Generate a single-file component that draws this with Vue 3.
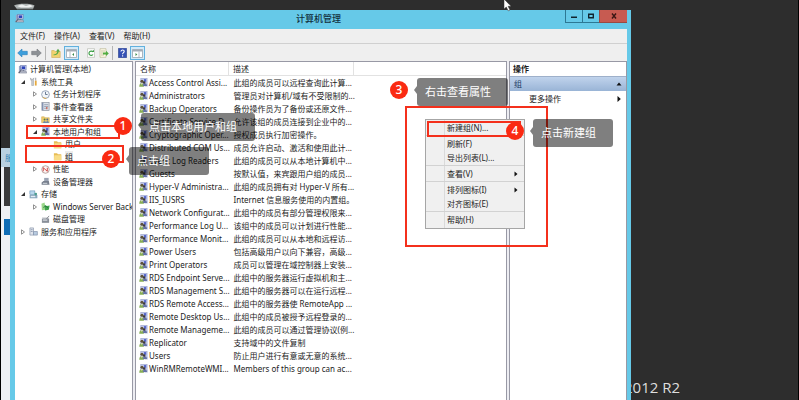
<script setup>
import { ref } from 'vue'

const menus = ['文件(F)', '操作(A)', '查看(V)', '帮助(H)']

const tree = [
  { level: 0, icon: 'computer', label: '计算机管理(本地)', mark: '' },
  { level: 1, icon: 'tools', label: '系统工具', mark: 'open' },
  { level: 2, icon: 'clock', label: '任务计划程序', mark: 'closed' },
  { level: 2, icon: 'book', label: '事件查看器', mark: 'closed' },
  { level: 2, icon: 'share', label: '共享文件夹', mark: 'closed' },
  { level: 2, icon: 'users', label: '本地用户和组', mark: 'open' },
  { level: 3, icon: 'folder', label: '用户', mark: '' },
  { level: 3, icon: 'folder', label: '组', mark: '' },
  { level: 2, icon: 'perf', label: '性能', mark: 'closed' },
  { level: 2, icon: 'device', label: '设备管理器', mark: '' },
  { level: 1, icon: 'storage', label: '存储', mark: 'open' },
  { level: 2, icon: 'backup', label: 'Windows Server Back', mark: 'closed' },
  { level: 2, icon: 'disk', label: '磁盘管理', mark: '' },
  { level: 1, icon: 'service', label: '服务和应用程序', mark: 'closed' }
]

const groups = [
  ['Access Control Assi...', '此组的成员可以远程查询此计算...'],
  ['Administrators', '管理员对计算机/域有不受限制的...'],
  ['Backup Operators', '备份操作员为了备份或还原文件...'],
  ['Certificate Service D...', '允许该组的成员连接到企业中的...'],
  ['Cryptographic Oper...', '授权成员执行加密操作。'],
  ['Distributed COM Us...', '成员允许启动、激活和使用此计...'],
  ['Event Log Readers', '此组的成员可以从本地计算机中...'],
  ['Guests', '按默认值，来宾跟用户组的成员...'],
  ['Hyper-V Administra...', '此组的成员拥有对 Hyper-V 所有...'],
  ['IIS_IUSRS', 'Internet 信息服务使用的内置组。'],
  ['Network Configurat...', '此组中的成员有部分管理权限来...'],
  ['Performance Log U...', '该组中的成员可以计划进行性能...'],
  ['Performance Monit...', '此组的成员可以从本地和远程访...'],
  ['Power Users', '包括高级用户以向下兼容，高级...'],
  ['Print Operators', '成员可以管理在域控制器上安装...'],
  ['RDS Endpoint Serve...', '此组中的服务器运行虚拟机和主...'],
  ['RDS Management S...', '此组中的服务器可以在运行远程...'],
  ['RDS Remote Access...', '此组中的服务器使 RemoteApp ...'],
  ['Remote Desktop Us...', '此组中的成员被授予远程登录的...'],
  ['Remote Manageme...', '此组的成员可以通过管理协议(例...'],
  ['Replicator', '支持域中的文件复制'],
  ['Users', '防止用户进行有意或无意的系统...'],
  ['WinRMRemoteWMI...', 'Members of this group can ac...']
]

const contextMenu = [
  [{ label: '新建组(N)...' }],
  [{ label: '刷新(F)' }, { label: '导出列表(L)...' }],
  [{ label: '查看(V)', sub: true }],
  [{ label: '排列图标(I)', sub: true }, { label: '对齐图标(E)' }],
  [{ label: '帮助(H)' }]
]

const steps = [
  { n: 1, text: '点击本地用户和组' },
  { n: 2, text: '点击组' },
  { n: 3, text: '右击查看属性' },
  { n: 4, text: '点击新建组' }
]

const current = ref('组')
</script>

<template>
  <div class="desktop">
    <svg class="defs" width="0" height="0" aria-hidden="true">
      <symbol id="i-users" viewBox="0 0 10 10">
        <rect x="2" y=".3" width="7" height="6.500" fill="#c4cbec" stroke="#969dca" stroke-width=".6" />
        <path d="M5.500 1.200H8v3H5.500z" fill="#5566c8" />
        <path d="M6.500 6.800h3.200v2.700H6z" fill="#b9bfdd" />
        <path d="M.3 9.600c0-2.600.9-3.800 2.500-3.800s2.700 1.200 2.700 3.800z" fill="#86ad55" />
        <path d="M4.300 9c0-2.300.9-3.300 2.200-3.300S8.800 6.700 9 9z" fill="#6471a6" />
        <circle cx="3.300" cy="3.600" r="1.700" fill="#5e5238" />
        <circle cx="5.700" cy="4.900" r="1.400" fill="#3c3a3c" />
        <path d="M2.200 5.800l1 2 .9-2z" fill="#f6efd6" />
      </symbol>
      <symbol id="i-computer" viewBox="0 0 10 10">
        <path d="M1 1h2.500v7H1z" fill="#9aa7c7" />
        <rect x="3" y=".5" width="6" height="5" fill="#dfe5f5" stroke="#6574ad" stroke-width=".7" />
        <path d="M4 1.500h4v3H4z" fill="#2d43b8" />
        <path d="M5 5.500h2v1.500H5z" fill="#777f96" />
        <path d="M.5 8L3 6.600h6L9.700 9H1z" fill="#b8bccb" stroke="#6c7288" stroke-width=".5" />
        <path d="M1 9l3-4" stroke="#4a4c58" stroke-width=".9" />
      </symbol>
      <symbol id="i-tools" viewBox="0 0 10 10">
        <path d="M1.500 1l.5 2.500h1V9.500h2V3.500L5.500 1 4 2.500H3z" fill="#c9cdd2" stroke="#8b8f96" stroke-width=".5" />
        <path d="M6.500 4h2v5.500h-2z" fill="#e6a93d" />
        <path d="M7 .7h1V4H7z" fill="#8f939a" />
      </symbol>
      <symbol id="i-clock" viewBox="0 0 10 10">
        <circle cx="5" cy="5" r="4.300" fill="#f2f6fb" stroke="#8796ad" stroke-width=".9" />
        <path d="M5 2v3h2.300" fill="none" stroke="#4d5f7a" stroke-width=".9" />
        <path d="M2 8a4.300 4.300 0 0 0 4 1.300" fill="none" stroke="#d8a33f" />
      </symbol>
      <symbol id="i-book" viewBox="0 0 10 10">
        <rect x="1" y=".7" width="8" height="8.600" fill="#dde2ea" stroke="#7f8796" stroke-width=".7" />
        <path d="M2 1v8" stroke="#596f9c" stroke-width="1" />
        <path d="M3.500 3H8M3.500 5H8M3.500 7H6" stroke="#77839a" stroke-width=".7" />
        <path d="M6.500 5.500v2.500" stroke="#c54735" stroke-width="1.200" />
      </symbol>
      <symbol id="i-share" viewBox="0 0 10 10">
        <path d="M.7 2h3l1 1h4.500v5.500H.7z" fill="#f0ce6e" stroke="#c59b3b" stroke-width=".5" />
        <circle cx="4" cy="5" r="1.100" fill="#5b7e42" />
        <circle cx="7" cy="5" r="1.100" fill="#56688f" />
        <path d="M2.300 9c0-3 3.300-3 3.300 0zM5.500 9c0-3 3.300-3 3.300 0z" fill="#6d87a9" />
      </symbol>
      <symbol id="i-folder" viewBox="0 0 10 10">
        <path d="M1 1.500h3.500l1 1H9.200v6.800H1z" fill="#e8bd55" />
        <path d="M1.500 3.500h7.700v5.800H1z" fill="#f8dd88" />
      </symbol>
      <symbol id="i-perf" viewBox="0 0 10 10">
        <circle cx="5" cy="5" r="4.200" fill="#fdf5f4" stroke="#a38885" stroke-width=".8" />
        <path d="M2.500 7V3l4.500 4V3" fill="none" stroke="#c93d3a" stroke-width="1" />
      </symbol>
      <symbol id="i-device" viewBox="0 0 10 10">
        <path d="M3.500 1h5v4.500h-5z" fill="#9ba4b4" />
        <path d="M.7 6l2-1.500h6L9.500 8.700H.7z" fill="#777f8d" />
        <path d="M2 7h5" stroke="#dfe3e9" />
      </symbol>
      <symbol id="i-storage" viewBox="0 0 10 10">
        <rect x="1" y="1" width="5.500" height="4" fill="#b8d7ec" stroke="#5d8db0" stroke-width=".6" />
        <path d="M.7 5.500h8.600v3.700H.7z" fill="#8aa7bd" />
        <path d="M2 6.500h5v1.500H2z" fill="#e3eef5" />
        <circle cx="7.500" cy="4.500" r="1.500" fill="#4a9d8c" />
      </symbol>
      <symbol id="i-backup" viewBox="0 0 10 10">
        <path d="M.5 2l3.500-1.500 1 8-4 .8z" fill="#9ad68a" />
        <path d="M4 3l2.500 1.500L9.600 4 8.700 8.700 4.500 9.500z" fill="#3fa34c" />
        <path d="M2.500 6l3-1.500L8 7" fill="none" stroke="#1d6c35" stroke-width=".8" />
      </symbol>
      <symbol id="i-disk" viewBox="0 0 10 10">
        <path d="M1 2.500h6.500l1.500 2H2z" fill="#d3d6da" />
        <path d="M1 4h8v4.700H1z" fill="#888e98" />
        <path d="M2 5h5v1.300H2z" fill="#dee2e6" />
        <path d="M6 4.500L9 1" stroke="#6f747d" stroke-width=".9" />
      </symbol>
      <symbol id="i-service" viewBox="0 0 10 10">
        <path d="M1 1h4v8H1z" fill="#dfe4ec" stroke="#8491a8" stroke-width=".7" />
        <path d="M2 3h2M2 5h2" stroke="#6a7a96" stroke-width=".7" />
        <path d="M5 5h4.300v4H5z" fill="#b8cbe0" stroke="#7c8ca6" stroke-width=".7" />
      </symbol>
    </svg>

    <!-- strip of the window lying behind -->
    <div class="behind">
      <span class="behind-head">服</span>
      <span class="behind-dark"></span>
      <span class="behind-gap"></span>
      <span class="behind-blue"></span>
    </div>

    <main class="window">
      <header class="titlebar">
        <svg class="ico app-ico"><use href="#i-computer" /></svg>
        <h1>计算机管理</h1>
        <div class="controls">
          <button type="button" aria-label="最小化">
            <svg width="8" height="8" viewBox="0 0 8 8"><path d="M1 4.500h6v1.500H1z" fill="#10242e" /></svg>
          </button>
          <button type="button" aria-label="最大化">
            <svg width="8" height="8" viewBox="0 0 8 8"><path d="M1.700 2.200h4.600v3.600H1.700z" fill="none" stroke="#10242e" stroke-width="1.400" /></svg>
          </button>
          <button type="button" class="close" aria-label="关闭">
            <svg width="8" height="8" viewBox="0 0 8 8"><path d="M2 1.500l4 5M6 1.500l-4 5" stroke="#3a1613" stroke-width="1.400" /></svg>
          </button>
        </div>
      </header>

      <nav class="menubar">
        <button v-for="m in menus" :key="m" type="button">{{ m }}</button>
      </nav>

      <div class="toolbar">
        <button type="button" aria-label="后退">
          <svg width="11" height="10" viewBox="0 0 11 10"><path d="M.7 5L5 1v2.300h5.300v3.400H5V9z" fill="#3d9fdc" stroke="#2c7fb8" stroke-width=".6" /></svg>
        </button>
        <button type="button" aria-label="前进">
          <svg width="11" height="10" viewBox="0 0 11 10"><path d="M10.300 5L6 1v2.300H.7v3.400H6V9z" fill="#8d9195" stroke="#75797d" stroke-width=".6" /></svg>
        </button>
        <i class="sep"></i>
        <button type="button" aria-label="上移一级">
          <svg width="10" height="10" viewBox="0 0 10 10"><path d="M.7 2.500h2.500l1 1h5v6H.7z" fill="#f1d26f" stroke="#c9a145" stroke-width=".5" /><path d="M2.500 6.500C4.500 6.500 6 5.500 6.300 3.500H5L7 .8l2 2.700H7.700C7.500 6 5.500 7.500 2.500 7.300z" fill="#58a948" /></svg>
        </button>
        <button type="button" class="on" aria-label="显示控制台树">
          <svg width="11" height="9" viewBox="0 0 11 9"><path d="M.5.500h10v8H.5z" fill="#fff" stroke="#9aa3ae" stroke-width=".8" /><path d="M.5.800h10v1.700H.5z" fill="#a3abb5" /><path d="M4 2.500v6" stroke="#a3abb5" stroke-width=".8" /><path d="M8 4v3L6.200 5.500z" fill="#3b8a4a" /></svg>
        </button>
        <i class="gap"></i>
        <button type="button" aria-label="刷新">
          <svg width="10" height="10" viewBox="0 0 10 10"><path d="M1.500.7h7v8.600h-7z" fill="#fff" stroke="#aeb4aa" stroke-width=".6" /><path d="M7 4a2.200 2.200 0 1 0 0 2.500" fill="none" stroke="#3b9f45" stroke-width="1.200" /><path d="M5.500 4H8V1.800z" fill="#3b9f45" /></svg>
        </button>
        <button type="button" aria-label="导出列表">
          <svg width="10" height="10" viewBox="0 0 10 10"><path d="M1 .7h6v8.600H1z" fill="#fdfae6" stroke="#b3ae8b" stroke-width=".6" /><path d="M2 3h4M2 5h2M2 7h3" stroke="#aaa782" stroke-width=".6" /><path d="M4 4.500h3V2.800L9.800 5.500 7 8V6.500H4z" fill="#52ac42" /></svg>
        </button>
        <i class="sep"></i>
        <button type="button" aria-label="帮助">
          <svg width="9" height="10" viewBox="0 0 9 10"><path d="M.5.300h8v9.400h-8z" fill="#3550b5" stroke="#243a8a" stroke-width=".6" /><path d="M3 3.500C3 1.500 6.300 1.600 6.200 3.500 6.200 4.700 4.600 4.700 4.600 6.200M4.600 7.200v1.200" fill="none" stroke="#fff" stroke-width="1.100" /></svg>
        </button>
        <button type="button" class="on" aria-label="显示操作窗格">
          <svg width="11" height="9" viewBox="0 0 11 9"><path d="M.5.500h10v8H.5z" fill="#fff" stroke="#9aa3ae" stroke-width=".8" /><path d="M.5.800h10v1.700H.5z" fill="#a3abb5" /><path d="M7 2.500v6" stroke="#a3abb5" stroke-width=".8" /><path d="M3.500 4v3l1.800-1.500z" fill="#3b8a4a" /></svg>
        </button>
      </div>

      <div class="panes">
        <ul class="tree">
          <li v-for="t in tree" :key="t.label" :class="['lv' + t.level, { picked: t.label === current }]" @click="current = t.label">
            <svg class="mark" viewBox="0 0 6 6">
              <path v-if="t.mark === 'open'" d="M5 1v4H1z" fill="#333" />
              <path v-else-if="t.mark === 'closed'" d="M1.500.800L4.500 3l-3 2.200z" fill="#fff" stroke="#777" stroke-width=".8" />
            </svg>
            <svg class="ico"><use :href="'#i-' + t.icon" /></svg>
            <span>{{ t.label }}</span>
          </li>
        </ul>

        <section class="list">
          <table>
            <thead>
              <tr><th class="c-name">名称</th><th class="c-desc">描述</th><th></th></tr>
            </thead>
            <tbody>
              <tr v-for="g in groups" :key="g[0]">
                <td><div class="name"><svg class="ico"><use href="#i-users" /></svg>{{ g[0] }}</div></td>
                <td class="desc">{{ g[1] }}</td>
                <td></td>
              </tr>
            </tbody>
          </table>
        </section>

        <aside class="actions">
          <h2>操作</h2>
          <button type="button" class="group">组
            <svg width="6" height="6" viewBox="0 0 6 6"><path d="M.5 4.500L3 1.500l2.500 3z" fill="#111" /></svg>
          </button>
          <button type="button" class="more">更多操作
            <svg width="6" height="6" viewBox="0 0 6 6"><path d="M1.500 0L4.800 3 1.500 6z" fill="#111" /></svg>
          </button>
        </aside>
      </div>
    </main>

    <div class="wall"><span>2012 R2</span></div>

    <svg class="bin" width="24" height="8" viewBox="0 0 24 8" aria-hidden="true">
      <path d="M1 2.500C5 0 18 0 21.500 2.500L20 6H4z" fill="#aeb3b3" />
      <path d="M4 3l5-1.500 4 1.500 4-1.200 3 1.500-4 1.200H8z" fill="#eef0f0" />
      <path d="M4 6h16" stroke="#697071" />
    </svg>
    <svg class="cursor" width="10" height="14" viewBox="0 0 10 14" aria-hidden="true">
      <path d="M1 0v10l2.300-2 1.900 3.800 1.800-.8-1.900-3.700h3z" fill="#fff" stroke="#333" stroke-width=".5" />
    </svg>

    <div class="ctx" role="menu">
      <div v-for="(part, i) in contextMenu" :key="i" class="part">
        <button v-for="c in part" :key="c.label" type="button" role="menuitem">
          {{ c.label }}
          <svg v-if="c.sub" width="4" height="6" viewBox="0 0 4 6"><path d="M.5.500L3.500 3l-3 2.500z" fill="#111" /></svg>
        </button>
      </div>
    </div>

    <i class="frame f1"></i>
    <i class="frame f2"></i>
    <i class="frame f3"></i>
    <i class="frame f4"></i>
    <template v-for="s in steps" :key="s.n">
      <b :class="['dot', 'd' + s.n]">{{ s.n }}</b>
      <span :class="['tip', 't' + s.n]">{{ s.text }}</span>
    </template>
  </div>
</template>

<style>
body {
  margin: 0;
  background: #2d2d2d;
}
</style>

<style scoped>
.desktop {
  position: relative;
  display: grid;
  grid-template-columns: 10px minmax(0, 1fr) 167px;
  min-height: 100vh;
  overflow: hidden;
  border-right: 1px solid #000;
  background: #2d2d2d;
  color: #1c1c1c;
  font: 8px/12px "Noto Sans", "Noto Sans CJK SC", sans-serif;
}
.defs { position: absolute; }
button {
  margin: 0;
  padding: 0;
  border: 0;
  background: none;
  color: inherit;
  font: inherit;
  text-align: left;
}
svg { display: block; flex: none; }
.ico { width: 9px; height: 9px; }

.behind {
  display: flex;
  flex-direction: column;
  padding-top: 148px;
  border-left: 1px solid #000;
  background: linear-gradient(#2d2d2d 148px, #eef0f4 148px);
}
.behind-head {
  height: 19px;
  overflow: hidden;
  padding-left: 4px;
  background: #b9d0e0;
  color: #2f80b4;
  line-height: 19px;
}
.behind-dark { height: 39px; margin-left: 3px; background: #3a3a3c; }
.behind-gap { height: 13px; }
.behind-blue { height: 16px; margin-left: 3px; background: #0f6cb5; }

.window {
  display: flex;
  flex-direction: column;
  margin-top: 10px;
  padding: 0 4px 0 5px;
  background: #66c9e8;
}
.titlebar {
  display: flex;
  align-items: flex-start;
  height: 19px;
}
.app-ico { margin-top: 4px; }
h1 {
  flex: 1;
  margin: 0;
  padding-left: 48px;
  color: #12303d;
  font-size: 9px;
  font-weight: 500;
  line-height: 18px;
  text-align: center;
}
.controls { display: flex; }
.controls button {
  display: grid;
  place-items: center;
  width: 17px;
  height: 13px;
  border: 1px solid #2d7894;
  border-top: 0;
  border-right: 0;
}
.controls .close {
  width: 28px;
  border-color: #9b4a42;
  background: #c75b51;
}

.menubar {
  display: flex;
  gap: 9px;
  height: 14px;
  padding-left: 5px;
  border-bottom: 1px solid #d0d0d0;
  background: #efefef;
  line-height: 14px;
}
.toolbar {
  display: flex;
  align-items: center;
  gap: 3px;
  height: 17px;
  padding-left: 2px;
  background: #efefef;
}
.toolbar .on {
  padding: 2px 1px 1px;
  border: 1px solid #62b1de;
  background: #d3eaf8;
}
.sep { width: 1px; height: 14px; margin-right: 2px; background: #b5b5b5; }
.gap { width: 1px; }

.panes {
  display: grid;
  grid-template-columns: 118px minmax(0, 1fr) 118px;
  flex: 1;
  gap: 2px;
  background: #ededf2;
}
.tree,
.list,
.actions {
  border: 1px solid #9899a5;
  border-bottom: 0;
  background: #fff;
}
.tree {
  overflow: hidden;
  margin: 0;
  padding: 1px 0 0;
  border-left: 0;
  list-style: none;
}
.tree li {
  display: flex;
  align-items: center;
  gap: 3px;
  height: 12px;
  white-space: nowrap;
}
.tree li:nth-child(even) { height: 13px; }
.tree .mark { width: 6px; height: 6px; }
.lv0 { margin-left: -6px; }
.lv1 { margin-left: 5px; }
.lv2 { margin-left: 17px; }
.lv3 { margin-left: 29px; }
.picked span { background: #ececec; }

table {
  width: 100%;
  border-collapse: collapse;
  table-layout: fixed;
}
th,
td {
  height: 13px;
  padding: 0;
  font-weight: 400;
  text-align: left;
  line-height: 13px;
  white-space: nowrap;
}
th {
  padding-left: 4px;
  border-right: 1px solid #e2e2e2;
  border-bottom: 1px solid #e2e2e2;
}
th:last-child { border-right: 0; }
.c-name { width: 88px; }
.c-desc { width: 120px; }
.name {
  display: flex;
  align-items: center;
  gap: 1px;
  padding-left: 3px;
}
.desc { padding-left: 5px; }

.actions h2 {
  margin: 0;
  padding-left: 3px;
  font-size: 8px;
  font-weight: 700;
  line-height: 14px;
}
.actions button {
  display: flex;
  align-items: center;
  justify-content: space-between;
  width: 100%;
  height: 15px;
  padding: 0 4px;
}
.actions .group {
  border-top: 1px solid #9eb0ca;
  background: linear-gradient(#c0d3ec, #99b4d6);
  color: #1d3a63;
}
.actions .more { padding-left: 19px; }

.wall {
  overflow: hidden;
  align-self: end;
  color: #dedede;
  font: 15px/26px "Open Sans", "Noto Sans", sans-serif;
}
.wall span { margin-left: -7px; }

.bin { position: absolute; left: 13px; top: 3px; }
.cursor { position: absolute; left: 503px; top: -1px; }

.ctx {
  position: absolute;
  left: 425px;
  top: 119px;
  width: 98px;
  padding: 0 0 1px;
  border: 1px solid #a6a6a6;
  background: linear-gradient(90deg, #f0f0f0 18px, #dadada 18px, #dadada 19px, #f0f0f0 19px);
}
.part { padding-top: 1px; }
.part + .part { border-top: 1px solid #d2d2d2; }
.ctx button {
  display: flex;
  align-items: center;
  justify-content: space-between;
  width: 100%;
  height: 14px;
  padding: 0 6px 0 21px;
}

.frame { position: absolute; border: 2px solid #f4301c; box-sizing: border-box; }
.f1 { left: 26px; top: 125px; width: 94px; height: 14px; }
.f2 { left: 25px; top: 145px; width: 99px; height: 18px; }
.f3 { left: 405px; top: 106px; width: 143px; height: 141px; }
.f4 { left: 427px; top: 121px; width: 94px; height: 16px; }

.dot {
  position: absolute;
  width: 18px;
  height: 18px;
  border-radius: 50%;
  background: #fa2a12;
  color: #fff;
  font-size: 12px;
  font-weight: 500;
  line-height: 18px;
  text-align: center;
}
.d1 { left: 114px; top: 117px; }
.d2 { left: 102px; top: 150px; }
.d3 { left: 390px; top: 81px; }
.d4 { left: 506px; top: 122px; }

.tip {
  position: absolute;
  box-sizing: border-box;
  height: 28px;
  padding-left: 8px;
  border-radius: 3px;
  background: rgba(0, 0, 0, 0.5);
  color: #fff;
  font-size: 11px;
  line-height: 28px;
  white-space: nowrap;
}
.tip::before {
  content: "";
  position: absolute;
  left: -3px;
  top: 8px;
  border: solid transparent;
  border-width: 4px 3px 4px 0;
  border-right-color: rgba(0, 0, 0, 0.5);
}
.t1 { left: 141px; top: 113px; width: 114px; }
.t2 { left: 129px; top: 147px; width: 80px; }
.t3 { left: 417px; top: 78px; width: 91px; }
.t4 { left: 533px; top: 119px; width: 80px; }
</style>
